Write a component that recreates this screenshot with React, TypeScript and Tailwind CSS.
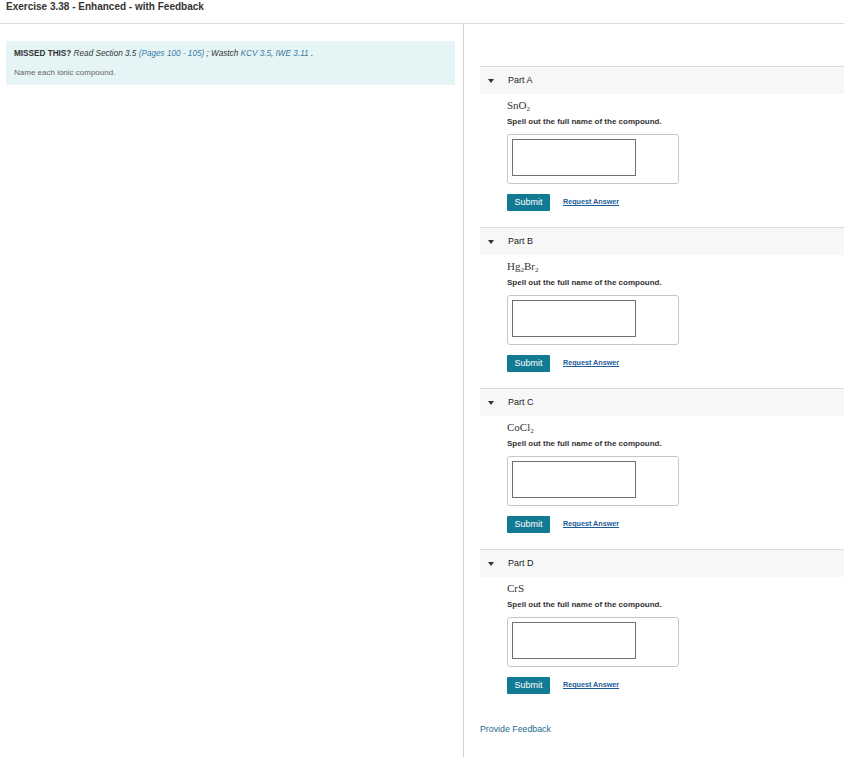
import React from "react";

type Part = { label: string; formula: React.ReactNode };

function Sub({ children }: { children: React.ReactNode }) {
  return <span className="relative top-[2px] text-[7px] leading-none">{children}</span>;
}

const parts: Part[] = [
  {
    label: "Part A",
    formula: (
      <>
        SnO<Sub>2</Sub>
      </>
    ),
  },
  {
    label: "Part B",
    formula: (
      <>
        Hg<Sub>2</Sub>Br<Sub>2</Sub>
      </>
    ),
  },
  {
    label: "Part C",
    formula: (
      <>
        CoCl<Sub>2</Sub>
      </>
    ),
  },
  { label: "Part D", formula: <>CrS</> },
];

function PartBlock({ part }: { part: Part }) {
  return (
    <div className="mb-[16px]">
      <div className="flex h-[28px] items-center border-t border-[#dcdcdc] bg-[#f7f7f7]">
        <span className="ml-[8px] h-0 w-0 border-x-[3px] border-t-[4px] border-x-transparent border-t-[#333]" />
        <span className="ml-[14px] text-[9px] text-[#222]">{part.label}</span>
      </div>
      <div className="pl-[27px]">
        <div className="mt-[4px] h-[14px] font-['Liberation_Serif',serif] text-[11px] leading-[14px] text-[#333]">
          {part.formula}
        </div>
        <div className="mt-[4px] h-[12px] text-[8px] font-semibold leading-[12px] text-[#333]">
          Spell out the full name of the compound.
        </div>
        <div className="mt-[6px] h-[50px] w-[172px] rounded-[3px] border border-[#c6c6c6] p-[4px]">
          <div className="h-[37px] w-[124px] border border-[#707070] bg-white" />
        </div>
        <div className="mt-[10px] flex items-center">
          <button className="h-[17px] w-[43px] rounded-[1px] bg-[#137a94] text-[9px] text-white">
            Submit
          </button>
          <a className="ml-[13px] text-[7.2px] font-semibold text-[#1d5c99] underline">
            Request Answer
          </a>
        </div>
      </div>
    </div>
  );
}

export default function App() {
  return (
    <div className="flex h-[757px] flex-col bg-white font-['Liberation_Sans',Arial,sans-serif]">
      <div className="h-[24px] border-b border-[#dedede] pl-[6px] pt-[1px] text-[10px] font-semibold leading-[12px] text-[#333]">
        Exercise 3.38 - Enhanced - with Feedback
      </div>
      <div className="flex flex-1">
        <div className="w-[464px] border-r border-[#d0d0d0] pl-[6px] pr-[8px] pt-[17px]">
          <div className="h-[44px] bg-[#e5f4f5] px-[8px] pt-[8px]">
            <div className="text-[8.2px] leading-[10px] text-[#333]">
              <span className="font-bold">MISSED THIS?</span>{" "}
              <span className="italic">
                Read Section 3.5{" "}
                <span className="text-[#3a7ca5]">(Pages 100 - 105)</span> ; Wastch{" "}
                <span className="text-[#3a7ca5]">KCV 3.5</span>,{" "}
                <span className="text-[#3a7ca5]">IWE 3.11</span> .
              </span>
            </div>
            <div className="mt-[9px] text-[8px] leading-[10px] text-[#666]">
              Name each ionic compound.
            </div>
          </div>
        </div>
        <div className="flex-1 pl-[16px] pt-[42px]">
          {parts.map((p) => (
            <PartBlock key={p.label} part={p} />
          ))}
          <div className="mt-[29px] text-[8.8px] leading-[12px] text-[#1c6a8c]">
            Provide Feedback
          </div>
        </div>
      </div>
    </div>
  );
}
